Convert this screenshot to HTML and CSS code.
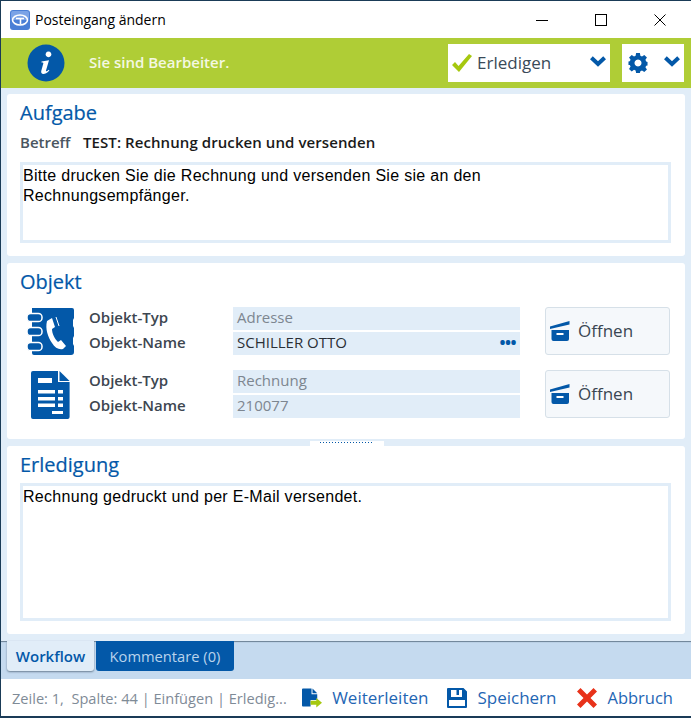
FILE: index.html
```html
<!DOCTYPE html>
<html lang="de">
<head>
<meta charset="utf-8">
<title>Posteingang ändern</title>
<link rel="stylesheet" href="styles.css">
</head>
<body>
<div class="window">
  <header class="titlebar">
    <svg class="app-icon" width="20" height="20" viewBox="0 0 20 20"><rect width="20" height="20" rx="3" fill="#4a7fd6"/><rect x="1" y="1" width="18" height="9" rx="2" fill="#7ba3e6"/><ellipse cx="10" cy="10" rx="7.500" ry="5" fill="none" stroke="#fff" stroke-width="1.600"/><path d="M6 8.500h8M10.500 8.500v6" stroke="#fff" stroke-width="1.600" fill="none"/></svg>
    <span class="title">Posteingang ändern</span>
    <div class="winctl">
      <svg width="12" height="12" viewBox="0 0 12 12"><path d="M0 6.500h12" stroke="#000"/></svg>
      <svg width="12" height="12" viewBox="0 0 12 12"><rect x=".5" y=".5" width="11" height="11" fill="none" stroke="#000"/></svg>
      <svg width="12" height="12" viewBox="0 0 12 12"><path d="M.5.5l11 11M11.500.5l-11 11" stroke="#000"/></svg>
    </div>
  </header>

  <div class="statusbar">
    <svg class="info" width="38" height="38" viewBox="0 0 38 38"><circle cx="19" cy="19" r="18.500" fill="#0358a8"/><path d="M21.500 7.500a2.900 2.900 0 1 1-.01 0zM14.500 17.500l7.500-1.300-3 10.300c-.3 1 .4 1.200 2.800-.8l.6.8c-2.500 2.700-4.300 3.500-6 3.500-1.900 0-2.600-1.300-2.100-3.200l2-7.300c.2-.9-.2-1.100-1.800-1z" fill="#fff"/></svg>
    <span class="status-text">Sie sind Bearbeiter.</span>
    <div class="drop drop-action">
      <svg width="20" height="18" viewBox="0 0 20 18"><path d="M0 11l3-3 3.500 4L17 0l3 2L7 18z" fill="#a6c80f"/></svg>
      <span class="drop-label">Erledigen</span>
      <svg class="chev" width="16" height="11" viewBox="0 0 16 11"><path d="M1.400 1.800L8 8l6.600-6.200" fill="none" stroke="#0358a8" stroke-width="4"/></svg>
    </div>
    <div class="drop drop-gear">
      <svg width="20" height="20" viewBox="0 0 20 21"><path fill="#0358a8" fill-rule="evenodd" d="M8 0h4l.5 2.800 1.700.8L16.600 2l2.800 2.800-1.600 2.400.8 1.700L20 9.500v3.500l-1.400.3-.8 1.700 1.600 2.400-2.800 2.600-2.400-1.600-1.700.7L12 21H8l-.5-2.600-1.700-.7-2.400 1.600L.6 16.700l1.600-2.400-.8-1.700L0 12.500V8.900l1.400-.2.800-1.700L.6 4.800 3.400 2l2.400 1.600 1.700-.8zM10 6.800a3.700 3.700 0 1 0 .01 0z"/></svg>
      <svg class="chev" width="16" height="11" viewBox="0 0 16 11"><path d="M1.400 1.800L8 8l6.600-6.200" fill="none" stroke="#0358a8" stroke-width="4"/></svg>
    </div>
  </div>

  <main class="content">
    <section class="card card-task">
      <h2 class="card-title">Aufgabe</h2>
      <div class="subject"><span class="subject-label">Betreff</span><span class="subject-value">TEST: Rechnung drucken und versenden</span></div>
      <div class="memo memo-task">Bitte drucken Sie die Rechnung und versenden Sie sie an den<br>Rechnungsempfänger.</div>
    </section>

    <section class="card card-object">
      <h2 class="card-title">Objekt</h2>
      <div class="obj-row">
        <svg class="obj-icon" width="48" height="50" viewBox="0 0 48 50"><path fill="#0358a8" d="M8 1h38a2 2 0 0 1 2 2v8l-1 2v6l1 2v8l-1 2v6l1 2v6a3 3 0 0 1-3 3H8a2 2 0 0 1-2-2V1z"/><g fill="#0358a8" stroke="#fff" stroke-width="1.500"><rect x="1" y="6.500" width="15" height="8" rx="3.600"/><rect x="1" y="20.500" width="15" height="8" rx="3.600"/><rect x="1" y="35.500" width="15" height="8" rx="3.600"/></g><path fill="#fff" d="M21 14l5-3 3 9-3 2c0 5 3 10 6 13l3-2 5 6-3 3c-4 1-8-1-11-6-4-6-7-14-5-22z"/><path d="M30 10l3 9" stroke="#fff" stroke-width="1"/></svg>
        <div class="fields">
          <div class="field-row"><span class="field-label">Objekt-Typ</span><span class="field-value muted">Adresse</span></div>
          <div class="field-row"><span class="field-label">Objekt-Name</span><span class="field-value">SCHILLER OTTO<span class="dots">•••</span></span></div>
        </div>
        <button class="open-btn" type="button">
          <svg width="20" height="20" viewBox="0 0 20 20"><path d="M0 5.500L19.500 0v3.500L0 8z" fill="#0358a8"/><path d="M1.500 9H19v9a2 2 0 0 1-2 2H3.500a2 2 0 0 1-2-2z" fill="#0358a8"/><rect x="6.500" y="12" width="7" height="2" fill="#fff"/></svg>
          <span class="open-label">Öffnen</span>
        </button>
      </div>
      <div class="obj-row">
        <svg class="obj-icon" width="48" height="50" viewBox="0 0 48 50"><path fill="#0358a8" d="M7 1h25v11h11.600v35a2 2 0 0 1-2 2H7a2 2 0 0 1-2-2V3a2 2 0 0 1 2-2z"/><path fill="#0358a8" d="M33.500 1l10.100 10H33.500z"/><g fill="#fff"><rect x="12" y="8" width="14" height="5"/><rect x="12" y="20" width="17" height="3.500"/><rect x="32" y="20" width="5" height="3.500"/><rect x="12" y="27" width="17" height="3.500"/><rect x="32" y="27" width="5" height="3.500"/><rect x="12" y="33.500" width="17" height="3.500"/><rect x="32" y="33.500" width="5" height="3.500"/><rect x="26" y="41" width="11" height="3"/></g></svg>
        <div class="fields">
          <div class="field-row"><span class="field-label">Objekt-Typ</span><span class="field-value muted">Rechnung</span></div>
          <div class="field-row"><span class="field-label">Objekt-Name</span><span class="field-value muted">210077</span></div>
        </div>
        <button class="open-btn" type="button">
          <svg width="20" height="20" viewBox="0 0 20 20"><path d="M0 5.500L19.500 0v3.500L0 8z" fill="#0358a8"/><path d="M1.500 9H19v9a2 2 0 0 1-2 2H3.500a2 2 0 0 1-2-2z" fill="#0358a8"/><rect x="6.500" y="12" width="7" height="2" fill="#fff"/></svg>
          <span class="open-label">Öffnen</span>
        </button>
      </div>
    </section>

    <div class="splitter"><span class="grip"></span></div>

    <section class="card card-done">
      <h2 class="card-title">Erledigung</h2>
      <div class="memo memo-done">Rechnung gedruckt und per E-Mail versendet.</div>
    </section>
  </main>

  <nav class="tabs">
    <span class="tab tab-active">Workflow</span>
    <span class="tab tab-inactive">Kommentare (0)</span>
  </nav>

  <footer class="footer">
    <span class="caret-info">Zeile: 1,&nbsp; Spalte: 44 | Einfügen | Erledig...</span>
    <span class="action">
      <svg width="20" height="20" viewBox="0 0 21 20"><path fill="#0358a8" d="M0 1a1 1 0 0 1 1-1h9v6h6v6H9v7H1a1 1 0 0 1-1-1z"/><path fill="#0358a8" d="M11 0l5 5h-5z"/><path fill="#a6c80f" d="M9 13h6v-3l6 5-6 5v-3H9z"/></svg>
      Weiterleiten
    </span>
    <span class="action action-save">
      <svg width="20" height="20" viewBox="0 0 20 20"><path fill="#0358a8" fill-rule="evenodd" d="M1 0h15.500L20 3.500V19a1 1 0 0 1-1 1H1a1 1 0 0 1-1-1V1a1 1 0 0 1 1-1zm1 12v6h16v-6zM4 2v7h11V2h-3v5H9.500V2z"/></svg>
      Speichern
    </span>
    <span class="action action-cancel">
      <svg width="20" height="20" viewBox="0 0 20 20"><path fill="#e8321a" d="M3.500 0L10 6.500 16.500 0 20 3.500 13.500 10 20 16.500 16.500 20 10 13.500 3.500 20 0 16.500 6.500 10 0 3.500z"/></svg>
      Abbruch
    </span>
  </footer>
</div>
</body>
</html>
```

FILE: styles.css
```css
* { box-sizing: border-box; }
html, body { margin: 0; padding: 0; }
body { width: 691px; height: 718px; overflow: hidden; font-family: "Open Sans", sans-serif; background: #fff; }
.window {
  width: 691px; height: 718px;
  border: 1px solid #1a3b57;
  border-right: 0;
  display: flex; flex-direction: column;
  background: #fff;
}
.titlebar { height: 37px; flex: none; display: flex; align-items: center; padding-left: 9px; background: #fff; }
.app-icon { margin-right: 5px; margin-top: 1px; }
.title { font-size: 14px; color: #000; margin-bottom: 1px; }
.winctl { margin-left: auto; display: flex; gap: 47px; padding-right: 25px; margin-top: 1px; }
.statusbar { height: 50px; flex: none; background: #afcd36; display: flex; align-items: center; padding: 0 7px 0 26px; }
.info { flex: none; }
.status-text { margin-left: 24px; margin-bottom: 2px; color: #f4f8e2; font-size: 15px; font-weight: 600; }
.drop { background: #fff; height: 38px; display: flex; align-items: center; }
.drop-action { width: 162px; margin-left: auto; padding: 0 2px 0 4px; }
.drop-label { font-size: 17px; color: #3a4a58; margin-left: 5px; margin-bottom: 2px; }
.drop-action .chev { margin-left: auto; margin-right: 2px; margin-top: -3px; }
.drop-gear { width: 62px; margin-left: 12px; padding-left: 6px; }
.drop-gear .chev { margin-left: auto; margin-right: 4px; margin-top: -3px; }
.content { flex: 1; background: #e1edf8; padding: 6px 6px 7px; display: flex; flex-direction: column; min-height: 0; }
.card { background: #fff; border-radius: 3px; padding: 6px 14px 0 13px; flex: none; }
.card-task { height: 162px; margin-bottom: 7px; }
.card-object { height: 176px; }
.card-done { flex: 1; }
.card-title { margin: 0; font-size: 20px; font-weight: 400; line-height: 25px; color: #0358a8; -webkit-text-stroke: .2px #0358a8; }
.subject { margin-top: 6px; height: 22px; display: flex; align-items: center; font-size: 15px; font-weight: 600; }
.subject-label { color: #4a5560; width: 63px; }
.subject-value { color: #1a1a1a; letter-spacing: .08px; }
.memo { border: 3px solid #e1edf8; font-family: "Liberation Sans", Arial, sans-serif; font-size: 16px; letter-spacing: .3px; line-height: 20px; color: #000; padding: 1px 0 0 0; background: #fff; }
.memo-task { height: 81px; margin-top: 9px; }
.memo-done { height: 138px; margin-top: 6px; }
.obj-row { display: flex; height: 48px; margin-bottom: 15px; }
.card-title + .obj-row { margin-top: 13px; }
.obj-icon { flex: none; margin: 0 0 0 6px; overflow: visible; }
.fields { margin-left: 15px; display: flex; flex-direction: column; gap: 2px; width: 431px; }
.field-row { display: flex; height: 23px; align-items: center; }
.field-label { width: 144px; font-size: 15px; font-weight: 600; color: #3d4650; flex: none; padding-bottom: 4px; }
.field-value { width: 287px; height: 23px; background: #e1edf8; font-size: 15px; line-height: 20px; padding: 0 4px; color: #2a2f35; display: flex; justify-content: space-between; }
.field-value.muted { color: #7d8690; }
.dots { color: #0358a8; font-size: 16px; letter-spacing: -.5px; font-weight: 700; }
.open-btn { width: 125px; height: 48px; margin-left: 25px; flex: none; background: #f5f8fb; border: 1px solid #d6e0e8; border-radius: 3px; display: flex; align-items: center; padding: 0 0 0 4px; font-family: "Open Sans", sans-serif; font-size: 17px; color: #3a4652; gap: 8px; }
.open-label { margin-bottom: 2px; }
.splitter { height: 7px; flex: none; display: flex; justify-content: center; align-items: flex-start; }
.grip { display: block; width: 74px; height: 5px; margin-top: 2px; margin-left: 2px; background-color: #fff; background-image: repeating-linear-gradient(90deg, #0358a8 0 1px, transparent 1px 3px); background-size: 54px 1px; background-repeat: no-repeat; background-position: 10px 1px; }
.tabs { height: 38px; flex: none; background: #c5daef; box-shadow: inset 0 2px 1px -1px #6a7f93; display: flex; align-items: flex-start; padding: 0 0 0 6px; gap: 2px; }
.tab { font-size: 14.700px; height: 30px; display: flex; align-items: center; justify-content: center; border-radius: 0 0 3px 3px; }
.tab-active { width: 87px; background: #e1edf8; color: #0358a8; font-weight: 600; font-size: 15px; box-shadow: 0 1px 2px #6a7f93; }
.tab-inactive { width: 138px; background: #0358a8; color: #b9d3ec; }
.footer { height: 38px; flex: none; display: flex; align-items: center; padding: 0 18px 0 11px; border-bottom: 1px solid #1a3b57; }
.caret-info { font-size: 14.600px; color: #7f8b97; margin-right: auto; white-space: nowrap; }
.action { display: flex; align-items: center; gap: 10px; font-size: 17px; color: #1f66b4; }
.action-save { margin-left: 19px; }
.action-cancel { margin-left: 21px; font-size: 16.500px; }
```
